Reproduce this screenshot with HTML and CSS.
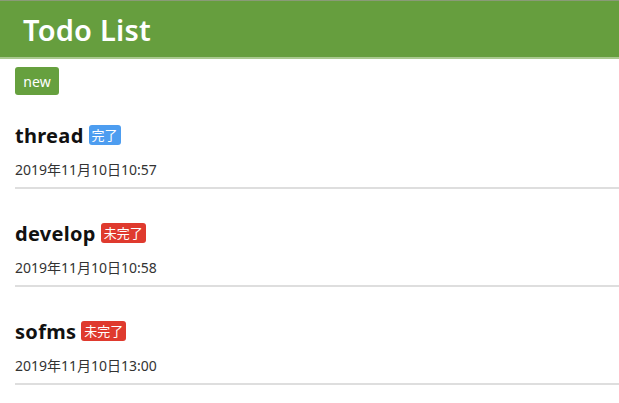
FILE: index.html
```html
<!DOCTYPE html>
<html lang="ja">
<head>
<meta charset="utf-8">
<title>Todo List</title>
<link rel="stylesheet" href="styles.css">
</head>
<body>
<header class="header">
  <h1 class="header-title">Todo List</h1>
</header>
<main class="content">
  <div class="toolbar"><button class="btn-new">new</button></div>
  <ul class="todo-list">
    <li class="todo">
      <div class="todo-head"><span class="todo-title">thread</span><span class="badge badge-done">完了</span></div>
      <div class="todo-date">2019年11月10日10:57</div>
    </li>
    <li class="todo">
      <div class="todo-head"><span class="todo-title">develop</span><span class="badge badge-todo">未完了</span></div>
      <div class="todo-date">2019年11月10日10:58</div>
    </li>
    <li class="todo">
      <div class="todo-head"><span class="todo-title">sofms</span><span class="badge badge-todo">未完了</span></div>
      <div class="todo-date">2019年11月10日13:00</div>
    </li>
  </ul>
</main>
</body>
</html>
```

FILE: styles.css
```css
html, body {
  margin: 0;
  padding: 0;
  background: #fff;
  font-family: "Noto Sans", "Noto Sans CJK JP", sans-serif;
  color: #222;
}
.header {
  border-top: 1px solid #8a9a78;
  border-bottom: 2px solid #a9c98f;
  background: #669e3e;
  height: 56px;
  display: flex;
  align-items: center;
  padding-left: 23px;
}
.header-title {
  margin: 0;
  color: #fff;
  font-size: 29px;
  font-weight: 600;
  letter-spacing: 0.2px;
}
.content {
  padding-left: 15px;
}
.toolbar {
  padding-top: 8px;
  height: 28px;
}
.btn-new {
  display: block;
  background: #66a03e;
  color: #fff;
  border: none;
  border-radius: 3px;
  font-family: inherit;
  font-size: 14px;
  width: 44px;
  height: 28px;
  padding: 0;
}
.todo-list {
  list-style: none;
  margin: 0;
  padding: 0;
}
.todo {
  border-bottom: 2px solid #dedede;
  padding-top: 33px;
  height: 63px;
}
.todo:first-child {
  padding-top: 29px;
}
.todo-head {
  display: flex;
  align-items: center;
  height: 22px;
}
.todo-title {
  font-size: 20px;
  font-weight: 700;
  letter-spacing: 0.3px;
  color: #111;
}
.badge {
  margin-left: 5px;
  color: #fff;
  font-size: 13px;
  border-radius: 3px;
  padding: 0 3px;
  height: 20px;
  line-height: 20px;
  font-family: "Noto Sans CJK JP", sans-serif;
}
.badge-done { background: #4d9df0; }
.badge-todo { background: #df3a2e; }
.todo-date {
  margin-top: 16px;
  font-size: 14px;
  line-height: 16px;
  color: #333;
}
```
